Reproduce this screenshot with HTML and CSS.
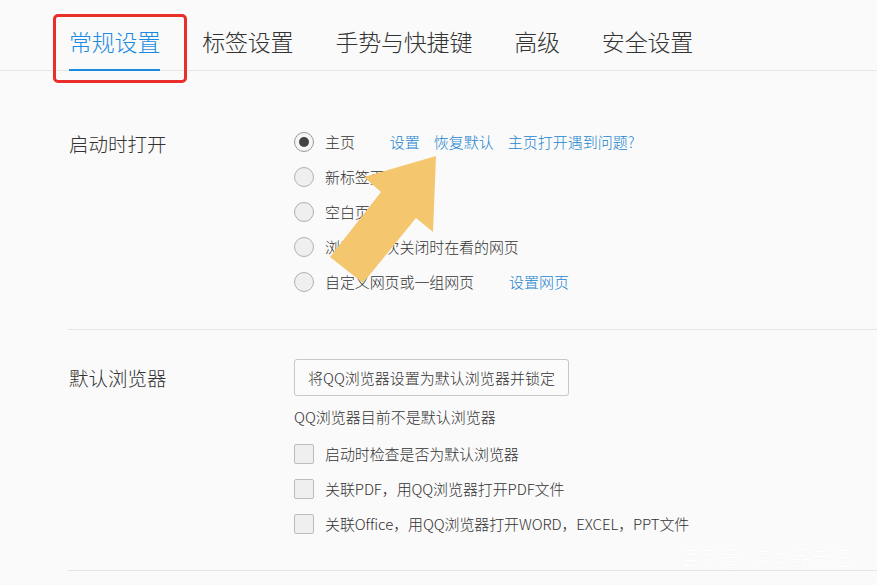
FILE: index.html
```html
<!DOCTYPE html>
<html lang="zh-CN">
<head>
<meta charset="utf-8">
<title>常规设置</title>
<link rel="stylesheet" href="styles.css">
</head>
<body>
<div class="page">
  <nav class="tabs">
    <div class="tab active">常规设置<span class="highlight"></span></div>
    <div class="tab">标签设置</div>
    <div class="tab">手势与快捷键</div>
    <div class="tab">高级</div>
    <div class="tab">安全设置</div>
  </nav>

  <section class="section startup">
    <div class="label">启动时打开</div>
    <div class="options">
      <div class="row"><span class="radio checked"></span><span class="text">主页</span><a class="link first">设置</a><a class="link">恢复默认</a><a class="link">主页打开遇到问题?</a></div>
      <div class="row"><span class="radio"></span><span class="text">新标签页</span></div>
      <div class="row"><span class="radio"></span><span class="text">空白页</span></div>
      <div class="row"><span class="radio"></span><span class="text">浏览器上次关闭时在看的网页</span></div>
      <div class="row"><span class="radio"></span><span class="text">自定义网页或一组网页</span><a class="link first">设置网页</a></div>
    </div>
  </section>

  <section class="section browser">
    <div class="label">默认浏览器</div>
    <div class="options">
      <button class="btn">将QQ浏览器设置为默认浏览器并锁定</button>
      <div class="status">QQ浏览器目前不是默认浏览器</div>
      <div class="checks">
        <div class="row"><span class="check"></span><span class="text">启动时检查是否为默认浏览器</span></div>
        <div class="row"><span class="check"></span><span class="text">关联PDF，用QQ浏览器打开PDF文件</span></div>
        <div class="row"><span class="check"></span><span class="text">关联Office，用QQ浏览器打开WORD，EXCEL，PPT文件</span></div>
      </div>
    </div>
  </section>

  <svg class="arrow" width="877" height="585" viewBox="0 0 877 585">
    <polygon points="436,156 364,177 381,192 330,257 363,283 416,218 433,232" fill="#f4c76f"/>
  </svg>

  <div class="watermark">百家号/媒体品老王</div>
</div>
</body>
</html>
```

FILE: styles.css
```css
* { box-sizing: border-box; }
html, body {
  margin: 0;
  padding: 0;
  background: #fafafa;
}
body {
  font-family: "Noto Sans CJK SC", "Microsoft YaHei", sans-serif;
  font-weight: 300;
  color: #333;
  width: 877px;
  height: 585px;
  overflow: hidden;
}
.page {
  position: relative;
  width: 877px;
  height: 585px;
}
.tabs {
  display: flex;
  gap: 42px;
  height: 71px;
  padding-left: 69px;
  border-bottom: 1px solid #e6e6e6;
}
.tab {
  position: relative;
  font-size: 23px;
  line-height: 28px;
  padding-top: 27px;
  color: #333;
  letter-spacing: -0.2px;
}
.tab.active {
  color: #1a8ae2;
  height: 71px;
  margin-bottom: -1px;
  border-bottom: 2px solid #1a8ae2;
}
.highlight {
  position: absolute;
  left: -16px;
  top: 14px;
  width: 134px;
  height: 69px;
  border: 3px solid #ea2e2a;
  border-radius: 5px;
}
.section {
  display: flex;
  margin-left: 68px;
  border-bottom: 1px solid #e4e4e4;
  padding-left: 1px;
}
.startup {
  padding-top: 53px;
  padding-bottom: 30px;
}
.browser {
  padding-top: 29px;
  padding-bottom: 29px;
}
.label {
  width: 225px;
  flex: none;
  font-size: 19.5px;
  color: #333;
}
.startup .label {
  line-height: 35px;
  padding-top: 2px;
}
.browser .label {
  line-height: 37px;
  padding-top: 0;
}
.options {
  display: flex;
  flex-direction: column;
  align-items: flex-start;
}
.row {
  display: flex;
  align-items: center;
  height: 35px;
  font-size: 15px;
}
.text { color: #333; letter-spacing: -0.1px; }
.radio {
  width: 20px;
  height: 20px;
  border-radius: 50%;
  border: 1px solid #b0b0b0;
  background: #efefef;
  margin-right: 11px;
  display: flex;
  align-items: center;
  justify-content: center;
}
.radio.checked { background: #f6f6f6; border-color: #999; }
.radio.checked::after {
  content: "";
  width: 10px;
  height: 10px;
  border-radius: 50%;
  background: #444;
}
.link {
  color: #1a84cf;
  margin-left: 14px;
  cursor: pointer;
}
.link.first { margin-left: 35px; }
.btn {
  font-family: inherit;
  font-weight: 300;
  font-size: 15px;
  color: #333;
  height: 37px;
  width: 275px;
  background: #fbfbfb;
  border: 1px solid #c8c8c8;
  border-radius: 3px;
  padding: 0;
}
.status {
  margin-top: 10px;
  line-height: 22px;
  font-size: 15px;
}
.checks { margin-top: 8px; }
.check {
  width: 20px;
  height: 20px;
  border: 1px solid #bdbdbd;
  border-radius: 2px;
  background: #efefef;
  margin-right: 11px;
}
.arrow {
  position: absolute;
  left: 0;
  top: 0;
  pointer-events: none;
}
.watermark {
  position: absolute;
  left: 680px;
  top: 543px;
  font-size: 20px;
  letter-spacing: 0.5px;
  color: #ffffff;
  text-shadow: 0 0 1px #efefef;
}
```
